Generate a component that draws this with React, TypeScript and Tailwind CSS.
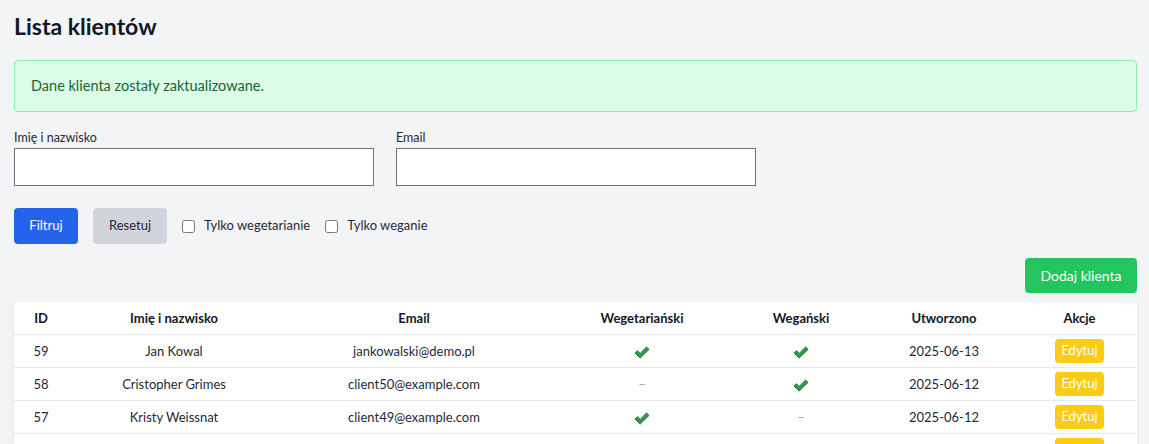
import { useState } from "react";

type Client = {
  id: number;
  name: string;
  email: string;
  vegetarian: boolean;
  vegan: boolean;
  created: string;
};

const clients: Client[] = [
  { id: 59, name: "Jan Kowal", email: "jankowalski@demo.pl", vegetarian: true, vegan: true, created: "2025-06-13" },
  { id: 58, name: "Cristopher Grimes", email: "client50@example.com", vegetarian: false, vegan: true, created: "2025-06-12" },
  { id: 57, name: "Kristy Weissnat", email: "client49@example.com", vegetarian: true, vegan: false, created: "2025-06-12" },
  { id: 56, name: "Bernadette Hane", email: "client48@example.com", vegetarian: false, vegan: false, created: "2025-06-12" },
];

function Check() {
  return (
    <svg width="16" height="13" viewBox="0 0 16 13" className="inline-block">
      <path
        d="M1 7.1 L3.4 4.8 L6.2 7.4 L12.6 1 L15 3.4 L6.2 12 Z"
        fill="#2ea043"
        stroke="#17632a"
        strokeWidth="0.9"
        strokeLinejoin="round"
      />
    </svg>
  );
}

function Flag({ on }: { on: boolean }) {
  return on ? <Check /> : <span className="text-[#9ca3af]">–</span>;
}

export default function App() {
  const [name, setName] = useState("");
  const [email, setEmail] = useState("");
  const [veg, setVeg] = useState(false);
  const [vegan, setVegan] = useState(false);

  return (
    <div
      className="min-h-screen bg-[#f3f4f6] pl-[14px] pr-3 pt-[10px] text-[#111827]"
      style={{ fontFamily: '"Segoe UI", Lato, "Noto Sans", sans-serif' }}
    >
      <h1 className="text-[23px] leading-8 font-bold">Lista klientów</h1>

      <div className="mt-[18px] rounded border border-[#86efac] bg-[#dcfce7] px-4 py-[15px] text-[14.5px] leading-5 text-[#166534]">
        Dane klienta zostały zaktualizowane.
      </div>

      <div className="mt-4 flex gap-[22px]">
        <div className="flex flex-col">
          <label className="text-[12.5px] leading-5 text-[#1f2937]">Imię i nazwisko</label>
          <input
            value={name}
            onChange={(e) => setName(e.target.value)}
            className="h-[38px] w-[360px] border border-[#6b7280] bg-white px-2 text-sm outline-none"
          />
        </div>
        <div className="flex flex-col">
          <label className="text-[12.5px] leading-5 text-[#1f2937]">Email</label>
          <input
            value={email}
            onChange={(e) => setEmail(e.target.value)}
            className="h-[38px] w-[360px] border border-[#6b7280] bg-white px-2 text-sm outline-none"
          />
        </div>
      </div>

      <div className="mt-[22px] flex items-center gap-[15px] text-[13px]">
        <button className="h-9 w-16 rounded bg-[#2563eb] text-white">Filtruj</button>
        <button className="h-9 w-[74px] rounded bg-[#d1d5db] text-[#1f2937]">Resetuj</button>
        <label className="flex items-center gap-[9px] text-[#1f2937]">
          <input type="checkbox" checked={veg} onChange={(e) => setVeg(e.target.checked)} className="h-[13px] w-[13px]" />
          Tylko wegetarianie
        </label>
        <label className="flex items-center gap-[9px] text-[#1f2937]">
          <input type="checkbox" checked={vegan} onChange={(e) => setVegan(e.target.checked)} className="h-[13px] w-[13px]" />
          Tylko weganie
        </label>
      </div>

      <div className="mt-[14px] flex justify-end">
        <button className="h-[35px] w-[112px] rounded bg-[#22c55e] text-sm text-white">Dodaj klienta</button>
      </div>

      <div className="mt-[9px] overflow-hidden rounded bg-white shadow-sm">
        <table className="w-full table-fixed text-center text-[13px]">
          <colgroup>
            <col className="w-[54px]" />
            <col className="w-[212px]" />
            <col className="w-[268px]" />
            <col className="w-[188px]" />
            <col className="w-[130px]" />
            <col className="w-[156px]" />
            <col />
          </colgroup>
          <thead>
            <tr className="border-b border-[#e5e7eb] font-bold">
              <th className="py-1.5 leading-5">ID</th>
              <th className="py-1.5 leading-5">Imię i nazwisko</th>
              <th className="py-1.5 leading-5">Email</th>
              <th className="py-1.5 leading-5">Wegetariański</th>
              <th className="py-1.5 leading-5">Wegański</th>
              <th className="py-1.5 leading-5">Utworzono</th>
              <th className="py-1.5 leading-5">Akcje</th>
            </tr>
          </thead>
          <tbody className="text-[#1f2937]">
            {clients.map((c) => (
              <tr key={c.id} className="border-b border-[#e5e7eb]">
                <td className="py-1 leading-5">{c.id}</td>
                <td className="py-1 leading-5">{c.name}</td>
                <td className="py-1 leading-5">{c.email}</td>
                <td className="py-1 leading-5">
                  <Flag on={c.vegetarian} />
                </td>
                <td className="py-1 leading-5">
                  <Flag on={c.vegan} />
                </td>
                <td className="py-1 leading-5">{c.created}</td>
                <td className="py-1">
                  <button className="h-6 w-[49px] rounded bg-[#facc15] text-[13px] text-white">Edytuj</button>
                </td>
              </tr>
            ))}
          </tbody>
        </table>
      </div>
    </div>
  );
}
